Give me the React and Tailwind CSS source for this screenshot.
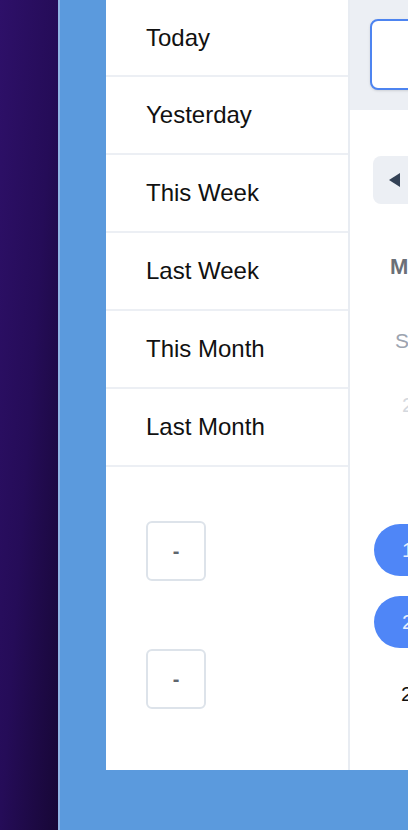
const RANGES = ["Today", "Yesterday", "This Week", "Last Week", "This Month", "Last Month"];

export default function App() {
  return (
    <div className="flex h-[830px] w-[408px] overflow-hidden bg-[#5b9add]" style={{ fontFamily: '"Liberation Sans", Arial, sans-serif' }}>
      <div className="h-full w-[58px] shrink-0 bg-gradient-to-br from-[#2e1069] via-[#250c58] to-[#170736]" />
      <div className="h-full w-[2px] shrink-0 bg-[#8fb4e4]" />
      <div className="flex-1 pl-[46px]">
        <div className="flex h-[770px] w-[600px] bg-white">
          {/* presets */}
          <div className="w-[244px] shrink-0 border-r-2 border-[#e8ecf2]">
            {RANGES.map((r, i) => (
              <div key={r} className={`flex ${i === 0 ? "h-[77px]" : "h-[78px]"} items-center border-b-2 border-[#eceff4] pl-10 text-[24px] text-[#111]`}>
                {r}
              </div>
            ))}
            <div className="flex flex-col gap-[68px] pl-10 pt-[54px]">
              {[0, 1].map((i) => (
                <button key={i} className="flex h-[60px] w-[60px] items-center justify-center rounded-md border-2 border-[#dde3ea] text-[20px] font-bold text-[#5f666d]">
                  -
                </button>
              ))}
            </div>
          </div>

          {/* calendar */}
          <div className="flex-1">
            <div className="h-[110px] bg-[#eceff4] pl-[20px] pt-[19px]">
              <div className="h-[71px] w-[300px] rounded-lg border-2 border-[#4d84f0] bg-white shadow-sm" />
            </div>
            <div className="pl-[23px] pt-[46px]">
              <button className="flex h-[48px] w-[60px] items-center rounded-lg bg-[#eceff4] pl-[16px]">
                <svg width="12" height="14" viewBox="0 0 12 14">
                  <path d="M11 0 L0 7 L11 14 Z" fill="#334155" />
                </svg>
              </button>
            </div>
            <div className="pl-[40px] pt-[52px] text-[22px] font-bold leading-none text-[#6b7078]">March 2024</div>
            <div className="pl-[45px] pt-[52px] text-[21px] leading-none text-[#9ca3af]">Su</div>
            <div className="flex flex-col pt-[18px]">
              <div className="flex h-[72px] items-center pl-[52px] text-[21px] text-[#d4d8de]">25</div>
              <div className="h-[73px]" />
              <div className="flex h-[72px] items-center pl-[24px]">
                <div className="flex h-[52px] w-[80px] items-center rounded-full bg-[#4f86f7] pl-[28px] text-[21px] text-[#e8efff]">10</div>
              </div>
              <div className="flex h-[72px] items-center pl-[24px]">
                <div className="flex h-[52px] w-[80px] items-center rounded-full bg-[#4f86f7] pl-[28px] text-[21px] text-[#e8efff]">24</div>
              </div>
              <div className="flex h-[72px] items-center pl-[51px] text-[21px] text-[#111]">24</div>
            </div>
          </div>
        </div>
      </div>
    </div>
  );
}
